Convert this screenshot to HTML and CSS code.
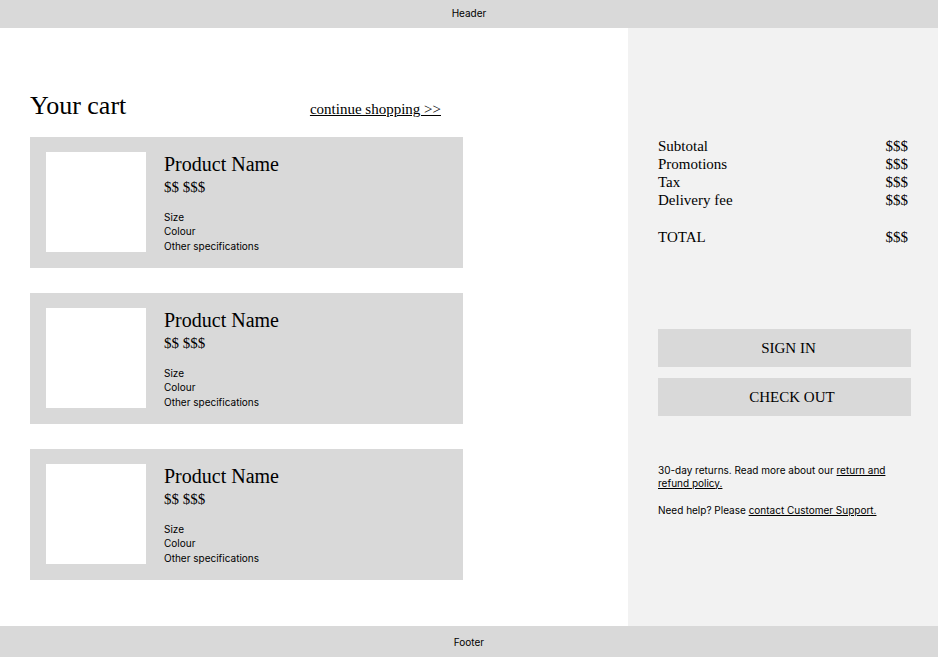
FILE: index.html
```html
<!DOCTYPE html>
<html lang="en">
<head>
    <meta charset="UTF-8">
    <meta name="viewport" content="width=device-width, initial-scale=1.0">
    <title>Your cart</title>
    <link rel="stylesheet" href="styles.css">
</head>
<body>

<header class="site-header">Header</header>

<div class="page">
    <main class="cart">
        <div class="cart-title">
            <h1>Your cart</h1>
            <a href="#">continue shopping &gt;&gt;</a>
        </div>

        <div class="cart-item">
            <div class="item-image"></div>
            <div class="item-info">
                <h2>Product Name</h2>
                <p class="item-price">$$ $$$</p>
                <ul class="item-specs">
                    <li>Size</li>
                    <li>Colour</li>
                    <li>Other specifications</li>
                </ul>
            </div>
        </div>

        <div class="cart-item">
            <div class="item-image"></div>
            <div class="item-info">
                <h2>Product Name</h2>
                <p class="item-price">$$ $$$</p>
                <ul class="item-specs">
                    <li>Size</li>
                    <li>Colour</li>
                    <li>Other specifications</li>
                </ul>
            </div>
        </div>

        <div class="cart-item">
            <div class="item-image"></div>
            <div class="item-info">
                <h2>Product Name</h2>
                <p class="item-price">$$ $$$</p>
                <ul class="item-specs">
                    <li>Size</li>
                    <li>Colour</li>
                    <li>Other specifications</li>
                </ul>
            </div>
        </div>
    </main>

    <aside class="summary">
        <div class="summary-rows">
            <div class="row"><span>Subtotal</span><span>$$$</span></div>
            <div class="row"><span>Promotions</span><span>$$$</span></div>
            <div class="row"><span>Tax</span><span>$$$</span></div>
            <div class="row"><span>Delivery fee</span><span>$$$</span></div>
        </div>
        <div class="row total"><span>TOTAL</span><span>$$$</span></div>

        <div class="summary-actions">
            <button type="button" class="sign-in">SIGN IN</button>
            <button type="button" class="check-out">CHECK OUT</button>
        </div>

        <p class="note">30-day returns. Read more about our <a href="#">return and refund policy.</a></p>
        <p class="note help">Need help? Please <a href="#">contact Customer Support.</a></p>
    </aside>
</div>

<footer class="site-footer">Footer</footer>

</body>
</html>
```

FILE: styles.css
```css
body {
    margin: 0;
    height: 657px;
    display: flex;
    flex-direction: column;
    font-family: "Liberation Serif", "Times New Roman", serif;
    color: #000;
    background-color: white;
}
.site-header,
.site-footer {
    flex-shrink: 0;
    background-color: #d9d9d9;
    font-family: Inter, "Liberation Sans", sans-serif;
    font-size: 10px;
    text-align: center;
}
.site-header {
    height: 28px;
    line-height: 27px;
}
.site-footer {
    height: 31px;
    line-height: 32px;
}
.page {
    flex: 1;
    display: flex;
    min-height: 0;
}

/* cart column */
.cart {
    flex: 1;
    padding: 62px 0 0 30px;
}
.cart-title {
    width: 411px;
    display: flex;
    justify-content: space-between;
    align-items: baseline;
    margin-bottom: 15px;
}
.cart-title h1 {
    margin: 0;
    font-size: 26px;
    font-weight: normal;
    line-height: 32px;
}
.cart-title a {
    color: #000;
    font-size: 15px;
}
.cart-item {
    width: 433px;
    height: 131px;
    box-sizing: border-box;
    padding: 15px 16px;
    display: flex;
    gap: 18px;
    background-color: #d9d9d9;
    margin-bottom: 25px;
    overflow: hidden;
}
.item-image {
    width: 100px;
    height: 100px;
    background-color: white;
}
.item-info h2 {
    margin: 0;
    font-size: 20px;
    font-weight: normal;
    line-height: 24px;
}
.item-price {
    margin: 2px 0 0;
    font-size: 15px;
    line-height: 18px;
}
.item-specs {
    list-style: none;
    margin: 14px 0 0;
    padding: 0;
    font-family: Inter, "Liberation Sans", sans-serif;
    font-size: 10px;
    line-height: 14.3px;
}

/* order summary */
.summary {
    width: 310px;
    box-sizing: border-box;
    padding: 109px 30px 0;
    background-color: #f2f2f2;
}
.row {
    display: flex;
    justify-content: space-between;
    font-size: 15px;
    line-height: 18px;
}
.row.total {
    margin-top: 19px;
}
.summary-actions {
    margin-top: 83px;
    display: flex;
    flex-direction: column;
    gap: 11px;
}
.summary-actions button {
    width: 253px;
    height: 38px;
    border: none;
    background-color: #d9d9d9;
    font-family: "Liberation Serif", "Times New Roman", serif;
    font-size: 15px;
    color: #000;
    padding: 0;
}
.summary-actions .sign-in {
    padding-left: 8px;
}
.summary-actions .check-out {
    padding-left: 15px;
}
.note {
    width: 235px;
    margin: 48px 0 0;
    font-family: Inter, "Liberation Sans", sans-serif;
    font-size: 10px;
    line-height: 12.5px;
}
.note.help {
    margin-top: 15px;
}
.note a {
    color: #000;
}
```
